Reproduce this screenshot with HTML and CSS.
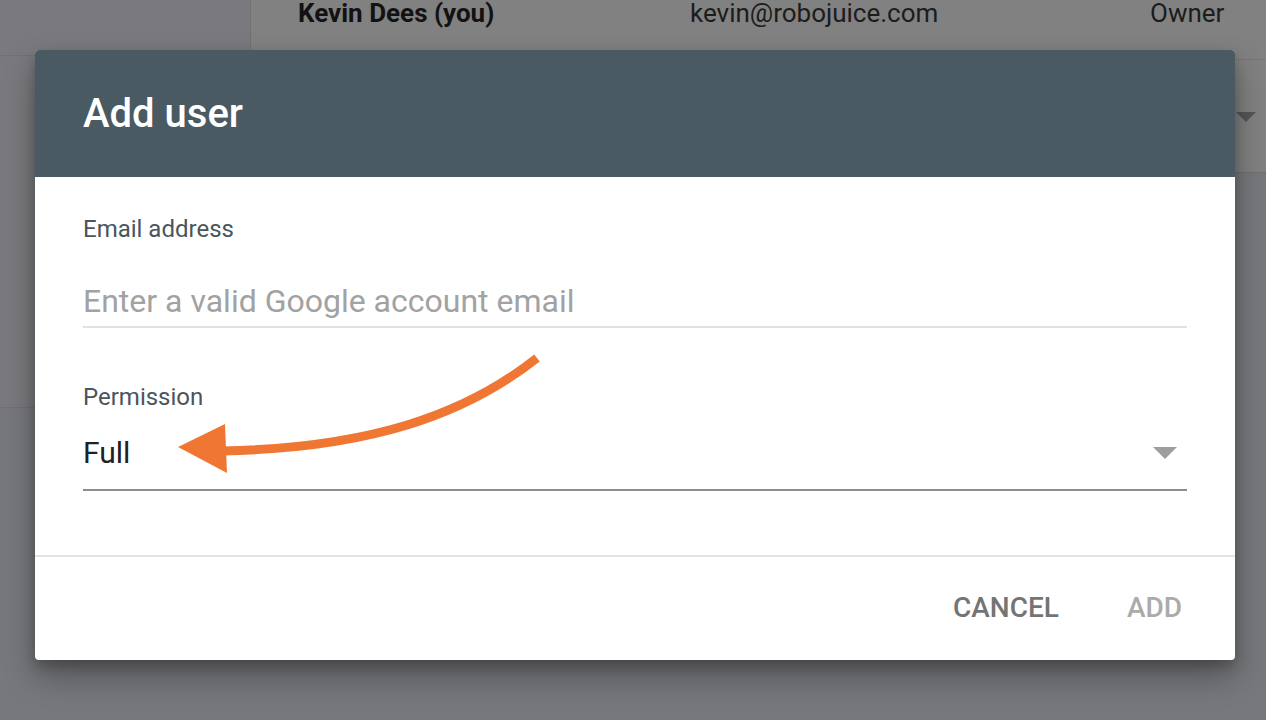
FILE: index.html
```html
<!DOCTYPE html>
<html>
<head>
  <meta charset="UTF-8" />
  <meta name="viewport" content="width=device-width, initial-scale=1.0" />
  <title>Add user</title>
  <link rel="stylesheet" href="styles.css">
</head>
<body>

  <div class="page">
    <aside class="sidebar">
      <div class="side-top"></div>
      <div class="side-mid"></div>
    </aside>

    <main class="main">
      <div class="users-card">
        <div class="user-row">
          <span class="user-name">Kevin Dees (you)</span>
          <span class="user-email">kevin@robojuice.com</span>
          <span class="user-role">Owner</span>
        </div>
        <div class="users-toolbar">
          <span class="toolbar-caret"></span>
        </div>
      </div>
    </main>
  </div>

  <div class="dialog">
    <div class="dialog-header">
      <h1>Add user</h1>
    </div>

    <div class="dialog-body">
      <label class="field-label" for="email">Email address</label>
      <input class="text-input" id="email" type="text" placeholder="Enter a valid Google account email">

      <div class="field-label perm-label">Permission</div>
      <div class="select-row">
        <span class="select-value">Full</span>
        <span class="select-caret"></span>
      </div>
    </div>

    <div class="dialog-footer">
      <button class="btn btn-cancel">CANCEL</button>
      <button class="btn btn-add">ADD</button>
    </div>

    <!-- callout arrow pointing at the permission value -->
    <svg class="callout" width="1200" height="610" viewBox="35 50 1200 610">
      <path d="M537,358 C465,415 370,448 222,451" fill="none" stroke="#ef7733" stroke-width="9" stroke-linecap="butt" />
      <polygon points="178,447 225,424 227,473" fill="#ef7733" />
    </svg>
  </div>

</body>
</html>
```

FILE: styles.css
```css
* {
  box-sizing: border-box;
}

body {
  margin: 0;
  font-family: Roboto, "Noto Sans", Arial, sans-serif;
  background: #77787c;
  height: 720px;
  overflow: hidden;
}

.page {
  display: flex;
  height: 720px;
}

.sidebar {
  width: 251px;
}

.side-top {
  height: 56px;
  background: #7a7a7e;
  border-right: 1px solid #717175;
  border-bottom: 1px solid #717175;
}

.side-mid {
  height: 352px;
  background: #7a7a7e;
  border-bottom: 1px solid #717175;
}

.main {
  flex: 1;
}

.users-card {
  background: #818181;
  border-bottom: 1px solid #6f6f72;
  height: 173px;
}

.user-row {
  display: flex;
  height: 60px;
  padding-left: 47px;
  font-size: 26px;
  line-height: 26px;
  color: #1c1c1c;
  border-bottom: 1px solid #777779;
}

.user-name {
  width: 392px;
  font-weight: 700;
  color: #121212;
}

.user-email {
  width: 460px;
}

.users-toolbar {
  position: relative;
  height: 112px;
}

.toolbar-caret {
  position: absolute;
  left: 985px;
  top: 52px;
  width: 0;
  height: 0;
  border-left: 10px solid transparent;
  border-right: 10px solid transparent;
  border-top: 10px solid #555557;
}

/* dialog */
.dialog {
  position: absolute;
  left: 35px;
  top: 50px;
  width: 1200px;
  height: 610px;
  background: #fff;
  border-radius: 4px;
  overflow: hidden;
  box-shadow: 0 16px 32px rgba(0, 0, 0, 0.32), 0 6px 12px rgba(0, 0, 0, 0.18);
  display: flex;
  flex-direction: column;
}

.dialog-header {
  background: #4a5a63;
  height: 127px;
  padding-left: 48px;
  display: flex;
  align-items: center;
}

.dialog-header h1 {
  margin: 0;
  padding-top: 1px;
  color: #fff;
  font-size: 40px;
  font-weight: 500;
  line-height: 48px;
}

.dialog-body {
  padding: 38px 48px 64px;
  border-bottom: 2px solid #e3e3e3;
}

.field-label {
  display: block;
  font-size: 24px;
  line-height: 28px;
  color: #4a555c;
}

.text-input {
  display: block;
  width: 100%;
  margin-top: 40px;
  height: 45px;
  padding: 0 0 8px;
  border: none;
  border-bottom: 2px solid #e2e2e2;
  font-family: inherit;
  font-size: 32px;
  line-height: 36px;
  color: #212121;
  outline: none;
}

.text-input::placeholder {
  color: #a2a2a2;
}

.perm-label {
  margin-top: 55px;
}

.select-row {
  display: flex;
  align-items: center;
  justify-content: space-between;
  margin-top: 24px;
  padding: 0 10px 18px 0;
  border-bottom: 2px solid #8e8e8e;
}

.select-value {
  font-size: 30px;
  line-height: 36px;
  color: #212121;
}

.select-caret {
  width: 0;
  height: 0;
  border-left: 12px solid transparent;
  border-right: 12px solid transparent;
  border-top: 12px solid #9e9e9e;
}

.dialog-footer {
  flex: 1;
  display: flex;
  justify-content: flex-end;
  align-items: flex-start;
  gap: 68px;
  padding: 35px 53px 0 0;
}

.btn {
  background: none;
  border: none;
  padding: 0;
  font-family: inherit;
  font-size: 28px;
  font-weight: 500;
  line-height: 32px;
  cursor: pointer;
}

.btn-cancel {
  color: #747474;
}

.btn-add {
  color: #ababab;
}

.callout {
  position: absolute;
  left: 0;
  top: 0;
  pointer-events: none;
}
```
